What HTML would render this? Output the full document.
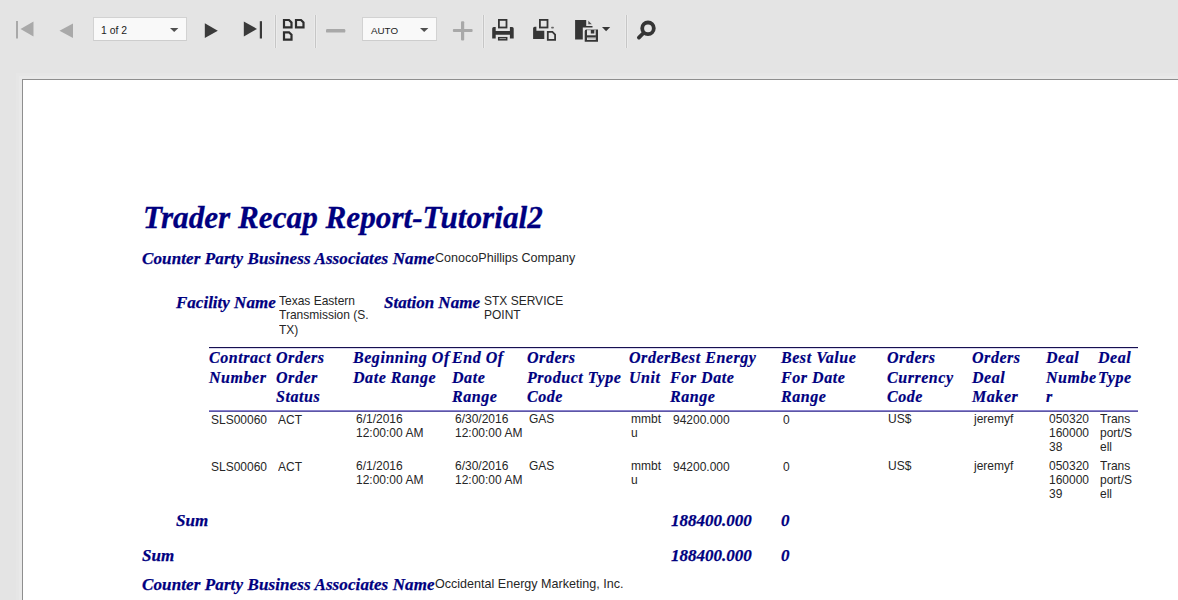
<!DOCTYPE html>
<html><head><meta charset="utf-8">
<style>
html,body{margin:0;padding:0;width:1178px;height:600px;overflow:hidden;background:#e4e4e4;}
body{position:relative;font-family:"Liberation Sans",sans-serif;}
.a{position:absolute;white-space:nowrap;}
.title{font-family:'Liberation Serif',serif;font-weight:bold;font-style:italic;font-size:32px;line-height:36px;color:#000080;transform:scaleX(0.975);transform-origin:0 0;-webkit-text-stroke:0.3px #000080;}
.lab{font-family:'Liberation Serif',serif;font-weight:bold;font-style:italic;font-size:17.5px;line-height:20px;color:#000080;-webkit-text-stroke:0.25px #000080;transform:scaleX(0.972);transform-origin:0 0;}
.lab2{font-family:'Liberation Serif',serif;font-weight:bold;font-style:italic;font-size:17.5px;line-height:20px;color:#000080;-webkit-text-stroke:0.25px #000080;letter-spacing:0.11px;transform:scaleX(0.972);transform-origin:0 0;}
.hd{font-family:'Liberation Serif',serif;font-weight:bold;font-style:italic;font-size:16px;line-height:19.7px;color:#000080;letter-spacing:0.55px;-webkit-text-stroke:0.2px #000080;}
.val{font-family:'Liberation Sans',sans-serif;font-weight:normal;font-style:normal;font-size:13.5px;line-height:14px;color:#262626;transform:scaleX(0.93);transform-origin:0 0;}
.txt{font-family:'Liberation Sans',sans-serif;font-weight:normal;font-style:normal;font-size:13px;line-height:14.4px;color:#262626;transform:scaleX(0.923);transform-origin:0 0;}
.cell{font-family:'Liberation Sans',sans-serif;font-weight:normal;font-style:normal;font-size:13px;line-height:14.2px;color:#262626;transform:scaleX(0.923);transform-origin:0 0;}
.sep{position:absolute;top:15px;width:1px;height:32.5px;background:#c6c6c6;box-shadow:1px 0 0 #ebebeb,-1px 0 0 #eaeaea;}
.dd{position:absolute;top:17px;height:24px;background:#f9f9f9;border:1px solid #d2d2d2;border-bottom-color:#cdcdcd;box-sizing:border-box;}
.dd span{position:absolute;top:5.6px;font-size:10.4px;line-height:14px;color:#222;font-family:"Liberation Sans",sans-serif;}
#page{position:absolute;left:22px;top:79px;width:1300px;height:700px;background:#fff;border-left:1px solid #8e8e8e;border-top:1px solid #8e8e8e;box-shadow:-1px -1px 0 2px #e9e9e9, -1px -1px 0 5px #e6e6e6;}
.ln{position:absolute;}
</style></head><body>
<div id="page"></div>
<svg class="a" style="left:0;top:0" width="680" height="60">
  <g fill="#a9a9a9">
    <rect x="16" y="21" width="2" height="17.5"/>
    <polygon points="20.5,29 33.5,21.5 33.5,36.5"/>
    <polygon points="59.5,30.8 73,23.5 73,38"/>
  </g>
  <g fill="#3a3a3a">
    <polygon points="204.8,23.2 217.8,30.7 204.8,38.1"/>
    <polygon points="243.8,21.5 257,28.9 243.8,36.4"/>
    <rect x="259.8" y="21.2" width="2.2" height="17.3"/>
  </g>
  <g fill="none" stroke="#2e2e2e" stroke-width="2.2">
    <path d="M284,20 h5 l2.5,2.5 v4.8 h-7.5 z"/>
    <path d="M296,20 h5 l2.5,2.5 v4.8 h-7.5 z"/>
    <path d="M284,32.3 h5 l2.5,2.5 v4.8 h-7.5 z"/>
  </g>
  <g fill="#a8a8a8">
    <rect x="326" y="29" width="19.3" height="3.6" rx="1.2"/>
    <rect x="452.9" y="29" width="19.7" height="3" rx="1"/>
    <rect x="461" y="21.2" width="3.2" height="19.3" rx="1"/>
  </g>
  <!-- printer -->
  <g fill="#353535">
    <rect x="498.9" y="19.9" width="7.6" height="7.6" fill="none" stroke="#353535" stroke-width="1.8"/>
    <path d="M492.2,28.6 q0,-1.6 1.6,-1.6 h1.9 v3.9 h14.2 v-3.9 h2.2 q1.6,0 1.6,1.6 v10 h-3.8 v-3.9 h-14.2 v3.9 h-3.5 z"/>
    <rect x="498.7" y="37.7" width="8" height="2.1" fill="none" stroke="#353535" stroke-width="1.5"/>
  </g>
  <!-- print page -->
  <g fill="#353535">
    <rect x="539.9" y="19.9" width="7.6" height="7.6" fill="none" stroke="#353535" stroke-width="1.8"/>
    <path d="M533.1,28.3 q0,-1.6 1.6,-1.6 h1.7 v4 h7.9 v8.2 h-11.2 z"/>
    <path d="M547.8,31.8 h4.6 l2.7,2.7 v5.3 h-7.3 z" fill="none" stroke="#353535" stroke-width="1.8"/>
    <rect x="551.1" y="26.7" width="2.8" height="1.9" rx="0.8" fill="#666"/>
  </g>
  <!-- export -->
  <g fill="#353535">
    <path d="M575.1,20 h11.1 v5.9 h6.3 v1.6 h-9.7 v12.1 h-7.7 z"/>
    <polygon points="588.3,20.8 591.8,24.2 588.3,24.2" fill="#555"/>
    <path d="M584.7,31.2 q0,-1.7 1.7,-1.7 h9.3 h2.3 v12.2 h-13.3 z M587,36.5 v3.5 h8.7 v-3.5 z" fill-rule="evenodd"/>
    <rect x="587" y="29.5" width="8.7" height="6" fill="#e4e4e4"/>
    <rect x="587" y="29.5" width="8.7" height="0.8" fill="#8a8a8a"/>
    <rect x="590.8" y="30" width="3.5" height="3.5"/>
    <rect x="587" y="35.6" width="8.7" height="1.9"/>
    <rect x="587.5" y="38.2" width="7.7" height="1.2" fill="#bbb"/>
    <polygon points="602,26.9 610.2,26.9 606.1,31.2"/>
  </g>
  <!-- search -->
  <circle cx="648" cy="28.3" r="5.8" fill="none" stroke="#353535" stroke-width="3.8"/>
  <line x1="643.5" y1="33" x2="638.9" y2="37.6" stroke="#353535" stroke-width="3.8" stroke-linecap="round"/>
</svg>
<div class="sep" style="left:274.5px"></div>
<div class="sep" style="left:315.3px"></div>
<div class="sep" style="left:483.3px"></div>
<div class="sep" style="left:625.8px"></div>
<div class="dd" style="left:92.5px;width:94px"><span style="left:7.6px">1 of 2</span>
<svg style="position:absolute;left:76.5px;top:10px" width="9" height="5"><polygon points="0,0 8.4,0 4.2,4" fill="#505050"/></svg></div>
<div class="dd" style="left:361.5px;width:75px"><span style="left:8.5px;font-size:9.8px">AUTO</span>
<svg style="position:absolute;left:57.5px;top:10px" width="9" height="5"><polygon points="0,0 8.4,0 4.2,4" fill="#505050"/></svg></div>
<div class="ln" style="left:209px;top:347px;width:929px;height:1px;background:#161050"></div><div class="ln" style="left:209px;top:348px;width:929px;height:1px;background:#d8d6ec"></div>
<div class="ln" style="left:209px;top:410px;width:929px;height:1px;background:#8a82cc"></div><div class="ln" style="left:209px;top:411px;width:929px;height:1px;background:#5c56a6"></div>
<div class="a title" style="left:143px;top:199.0px">Trader Recap Report-Tutorial2</div>
<div class="a lab2" style="left:142px;top:248.0px">Counter Party Business Associates Name</div>
<div class="a val" style="left:435px;top:250.5px">ConocoPhillips Company</div>
<div class="a lab" style="left:176px;top:292.4px">Facility Name</div>
<div class="a txt" style="left:279px;top:293.9px">Texas Eastern<br>Transmission (S.<br>TX)</div>
<div class="a lab" style="left:384px;top:292.4px">Station Name</div>
<div class="a txt" style="left:484px;top:293.8px">STX SERVICE<br>POINT</div>
<div class="a hd" style="left:209px;top:347.9px">Contract<br>Number</div>
<div class="a hd" style="left:276px;top:347.9px">Orders<br>Order<br>Status</div>
<div class="a hd" style="left:353px;top:347.9px">Beginning Of<br>Date Range</div>
<div class="a hd" style="left:452px;top:347.9px">End Of<br>Date<br>Range</div>
<div class="a hd" style="left:527px;top:347.9px">Orders<br>Product Type<br>Code</div>
<div class="a hd" style="left:629px;top:347.9px">Order<br>Unit</div>
<div class="a hd" style="left:670px;top:347.9px">Best Energy<br>For Date<br>Range</div>
<div class="a hd" style="left:781px;top:347.9px">Best Value<br>For Date<br>Range</div>
<div class="a hd" style="left:887px;top:347.9px">Orders<br>Currency<br>Code</div>
<div class="a hd" style="left:972px;top:347.9px">Orders<br>Deal<br>Maker</div>
<div class="a hd" style="left:1046px;top:347.9px">Deal<br>Numbe<br>r</div>
<div class="a hd" style="left:1098px;top:347.9px">Deal<br>Type</div>
<div class="a cell" style="left:211px;top:412.5px">SLS00060</div>
<div class="a cell" style="left:278px;top:412.5px">ACT</div>
<div class="a cell" style="left:356px;top:412.0px">6/1/2016<br>12:00:00 AM</div>
<div class="a cell" style="left:455px;top:412.0px">6/30/2016<br>12:00:00 AM</div>
<div class="a cell" style="left:529px;top:412.0px">GAS</div>
<div class="a cell" style="left:631px;top:412.0px">mmbt<br>u</div>
<div class="a cell" style="left:673px;top:412.5px">94200.000</div>
<div class="a cell" style="left:783px;top:412.5px">0</div>
<div class="a cell" style="left:888px;top:412.0px">US$</div>
<div class="a cell" style="left:974px;top:412.0px">jeremyf</div>
<div class="a cell" style="left:1049px;top:412.0px">050320<br>160000<br>38</div>
<div class="a cell" style="left:1100px;top:412.0px">Trans<br>port/S<br>ell</div>
<div class="a cell" style="left:211px;top:459.5px">SLS00060</div>
<div class="a cell" style="left:278px;top:459.5px">ACT</div>
<div class="a cell" style="left:356px;top:459.0px">6/1/2016<br>12:00:00 AM</div>
<div class="a cell" style="left:455px;top:459.0px">6/30/2016<br>12:00:00 AM</div>
<div class="a cell" style="left:529px;top:459.0px">GAS</div>
<div class="a cell" style="left:631px;top:459.0px">mmbt<br>u</div>
<div class="a cell" style="left:673px;top:459.5px">94200.000</div>
<div class="a cell" style="left:783px;top:459.5px">0</div>
<div class="a cell" style="left:888px;top:459.0px">US$</div>
<div class="a cell" style="left:974px;top:459.0px">jeremyf</div>
<div class="a cell" style="left:1049px;top:459.0px">050320<br>160000<br>39</div>
<div class="a cell" style="left:1100px;top:459.0px">Trans<br>port/S<br>ell</div>
<div class="a lab" style="left:176px;top:509.7px">Sum</div>
<div class="a lab" style="left:671px;top:509.7px">188400.000</div>
<div class="a lab" style="left:781px;top:509.7px">0</div>
<div class="a lab" style="left:142px;top:545.3px">Sum</div>
<div class="a lab" style="left:671px;top:545.3px">188400.000</div>
<div class="a lab" style="left:781px;top:545.3px">0</div>
<div class="a lab2" style="left:142px;top:574.0px">Counter Party Business Associates Name</div>
<div class="a val" style="left:435px;top:577.3px">Occidental Energy Marketing, Inc.</div>
</body></html>
